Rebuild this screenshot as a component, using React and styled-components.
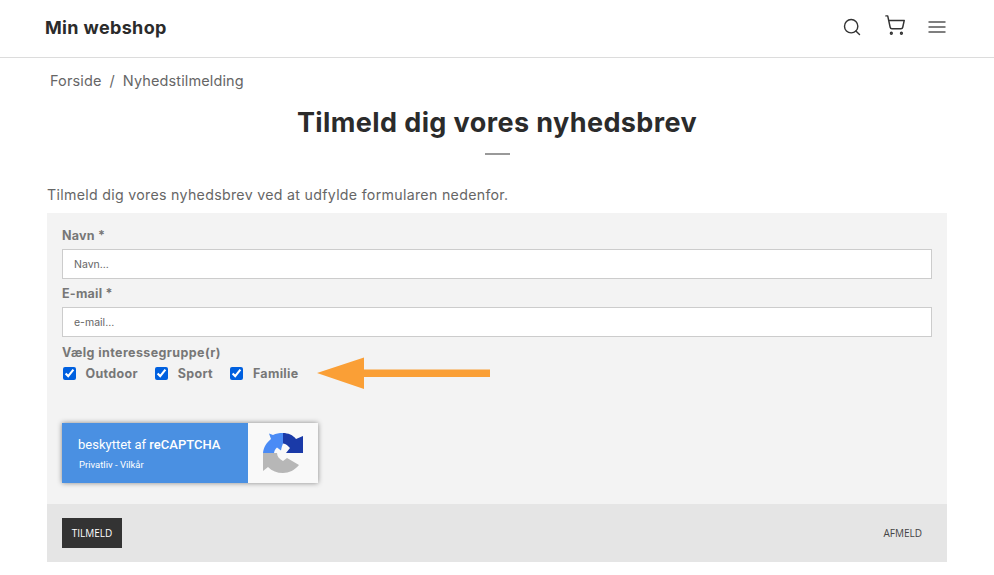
import React from "react"
import styled, { createGlobalStyle } from "styled-components"
import { Search, ShoppingCart } from "lucide-react"

const GlobalStyle = createGlobalStyle`
  html, body {
    margin: 0;
    padding: 0;
    background: #fff;
    font-family: Inter, "Liberation Sans", sans-serif;
    color: #666;
  }
  * {
    box-sizing: border-box;
  }
`

const Header = styled.header`
  height: 58px;
  border-bottom: 1px solid #dcdcdc;
  padding: 0 48px 0 45px;
  display: flex;
  align-items: center;
  justify-content: space-between;
`

const Logo = styled.div`
  font-size: 18px;
  font-weight: 700;
  color: #2b2b2b;
  letter-spacing: 0.35px;
  margin-top: -2px;
`

const IconRow = styled.div`
  display: flex;
  align-items: center;
  color: #333;
  margin-top: -3px;
`

const IconButton = styled.div`
  display: flex;
  margin-left: ${props => props.gap || 0}px;
  margin-top: ${props => props.lift || 0}px;
`

const Page = styled.main`
  width: 900px;
  margin-left: 47px;
`

const Breadcrumb = styled.nav`
  display: flex;
  gap: 8px;
  padding: 13px 0 0 3px;
  height: 47px;
  font-size: 14.5px;
  line-height: 20px;
  letter-spacing: 0.12px;
  color: #666;
`

const Title = styled.h1`
  margin: 0;
  text-align: center;
  font-size: 27px;
  line-height: 36px;
  font-weight: 700;
  letter-spacing: 0.4px;
  color: #2b2b2b;
`

const Divider = styled.div`
  width: 25px;
  height: 2px;
  background: #999;
  margin: 12px auto 0;
`

const Intro = styled.p`
  margin: 30px 0 8px;
  font-size: 14.2px;
  line-height: 20px;
  letter-spacing: 0.3px;
  color: #666;
`

const FormBox = styled.form`
  background: #f3f3f3;
`

const Fields = styled.div`
  height: 291px;
  padding: 15px 15px 0;
`

const Label = styled.label`
  display: block;
  font-size: 12.5px;
  line-height: 16px;
  font-weight: 700;
  letter-spacing: 0.25px;
  color: #777;
  margin-bottom: 5px;
`

const Input = styled.input`
  display: block;
  width: 100%;
  height: 30px;
  border: 1px solid #ccc;
  background: #fff;
  padding: 0 11px;
  margin-bottom: 7px;
  font-family: inherit;
  font-size: 10.5px;
  outline: none;
  &::placeholder {
    color: #666;
    opacity: 1;
  }
`

const GroupLabel = styled(Label)`
  margin-bottom: 2px;
  padding-top: 1px;
  letter-spacing: 0.4px;
`

const CheckRow = styled.div`
  display: flex;
  align-items: center;
  height: 20px;
`

const CheckItem = styled.label`
  display: flex;
  align-items: center;
  margin-right: 16.5px;
  font-size: 12.5px;
  font-weight: 700;
  letter-spacing: 0.3px;
  color: #777;
`

const Check = styled.input`
  width: 13px;
  height: 13px;
  margin: 0 9.5px 0 1px;
  accent-color: #0060df;
`

const ArrowWrap = styled.div`
  display: flex;
  margin-left: 2px;
`

const Badge = styled.div`
  display: flex;
  width: 256px;
  height: 60px;
  margin-top: 40px;
  box-shadow: 0 0 5px rgba(0, 0, 0, 0.45);
`

const BadgeText = styled.div`
  width: 186px;
  background: #4a90e2;
  color: #fff;
  padding: 14px 0 0 16px;
`

const BadgeTitle = styled.div`
  font-family: Roboto, sans-serif;
  font-size: 13px;
  line-height: 16px;
  b {
    font-weight: 500;
  }
`

const BadgeLinks = styled.div`
  font-family: Roboto, sans-serif;
  font-size: 9.5px;
  line-height: 12px;
  margin: 6px 0 0 1px;
`

const BadgeLogo = styled.div`
  flex: 1;
  background: #f9f9f9;
  display: flex;
  align-items: center;
  justify-content: center;
`

const Footer = styled.div`
  height: 58px;
  background: #e5e5e5;
  padding: 0 25px 0 15px;
  display: flex;
  align-items: center;
  justify-content: space-between;
`

const Submit = styled.button`
  width: 60px;
  height: 30px;
  border: 0;
  padding: 0;
  background: #333;
  color: #fff;
  font-family: "Open Sans", sans-serif;
  font-size: 10px;
  cursor: pointer;
`

const Unsubscribe = styled.a`
  font-family: "Open Sans", sans-serif;
  font-size: 10px;
  color: #444;
`

const Burger = () => (
  <svg width="18" height="14" viewBox="0 0 18 14" fill="none" stroke="#555" strokeWidth="1.7">
    <path d="M0.5 2h17M0.5 7h17M0.5 12h17" />
  </svg>
)

const Arrow = () => (
  <svg width="174" height="32" viewBox="0 0 174 32">
    <path d="M0 16 L47 0.5 V12.5 H173 V20 H47 V32 Z" fill="#fa9f36" />
  </svg>
)

const RecaptchaLogo = () => (
  <svg width="42" height="42" viewBox="0 0 42 42">
    <path d="M21 1 C17 1 14 1.5 11 3 L7 1.5 L9 7 C4.5 10.5 1.5 15.5 1 21 H12 C12.5 18 13.5 17 15 15.5 L19 18.5 C19.5 15 20.5 13 21 11.5 Z" fill="#4a8bf5" />
    <path d="M21 1 C26 1 31 3 34 7 L41 4 V21 H24 L28 16 C26 14 24 11.5 21 11.5 Z" fill="#1a3aa8" />
    <path d="M1 21 H15 C15 24 17 27 21 29 L25 26 L37 33 C33 38 27 41 21 41 C15 41 10 39 6 35 L1 39 Z" fill="#b7b7b7" />
  </svg>
)

const groups = ["Outdoor", "Sport", "Familie"]

const App = () => {
  return (
    <>
      <GlobalStyle />
      <Header>
        <Logo>Min webshop</Logo>
        <IconRow>
          <IconButton>
            <Search size={20} strokeWidth={1.7} />
          </IconButton>
          <IconButton gap={22} lift={-4}>
            <ShoppingCart size={22} strokeWidth={1.6} />
          </IconButton>
          <IconButton gap={22}>
            <Burger />
          </IconButton>
        </IconRow>
      </Header>
      <Page>
        <Breadcrumb>
          <span>Forside</span>
          <span>/</span>
          <span>Nyhedstilmelding</span>
        </Breadcrumb>
        <Title>Tilmeld dig vores nyhedsbrev</Title>
        <Divider />
        <Intro>Tilmeld dig vores nyhedsbrev ved at udfylde formularen nedenfor.</Intro>
        <FormBox>
          <Fields>
            <Label>Navn *</Label>
            <Input placeholder="Navn..." />
            <Label>E-mail *</Label>
            <Input placeholder="e-mail..." />
            <GroupLabel>Vælg interessegruppe(r)</GroupLabel>
            <CheckRow>
              {groups.map(group => (
                <CheckItem key={group}>
                  <Check type="checkbox" defaultChecked />
                  {group}
                </CheckItem>
              ))}
              <ArrowWrap>
                <Arrow />
              </ArrowWrap>
            </CheckRow>
            <Badge>
              <BadgeText>
                <BadgeTitle>
                  beskyttet af <b>reCAPTCHA</b>
                </BadgeTitle>
                <BadgeLinks>Privatliv - Vilkår</BadgeLinks>
              </BadgeText>
              <BadgeLogo>
                <RecaptchaLogo />
              </BadgeLogo>
            </Badge>
          </Fields>
          <Footer>
            <Submit type="button">TILMELD</Submit>
            <Unsubscribe>AFMELD</Unsubscribe>
          </Footer>
        </FormBox>
      </Page>
    </>
  )
}

export default App
